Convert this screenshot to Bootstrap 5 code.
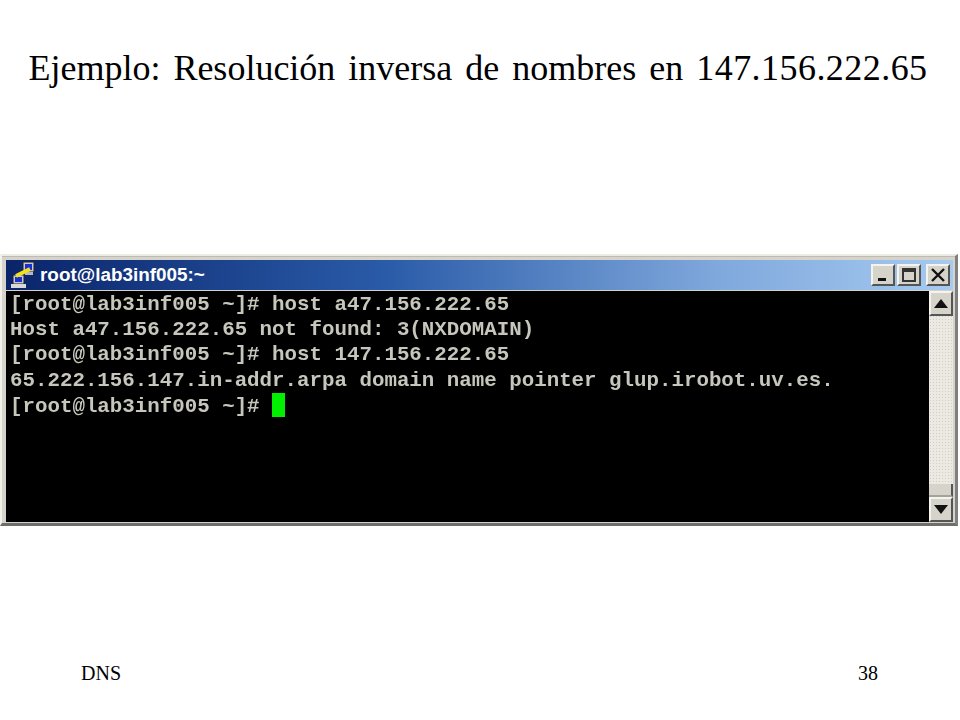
<!doctype html>
<html lang="es"><head><meta charset="utf-8"><title>DNS 38</title>
<link rel="stylesheet" href="https://cdn.jsdelivr.net/npm/bootstrap@5.3.0/dist/css/bootstrap.min.css">
<style>
html,body{margin:0;height:720px;overflow:hidden;background:#fff}
.slide{width:960px;height:720px;font-family:"Liberation Serif",serif;color:#000}
.slide-title{font-size:36px;line-height:42px;margin:0;padding:47px 4px 0 0;height:254px;font-weight:400;text-align:center;word-spacing:4px;font-family:"Liberation Serif",serif}
.title-num{letter-spacing:.45px}
.win{width:958px;height:272px;background:#d6d3ca;border-top:2px solid #ecebe6;border-bottom:3px solid #6e6e6a;padding:4px 2px 2px 4px;border-left:2px solid #f2f1ec;border-right:3px solid #808080;box-shadow:inset 0 1px 0 #bdbbb3}
.win-bar{height:30px;background:linear-gradient(90deg,#0a246a 0%,#2a5ba8 40%,#7fa8dc 75%,#a6caf0 100%);padding:0 3px 0 4px;color:#fff;font:700 18.9px/28px "Liberation Sans",sans-serif;margin-bottom:1px}
.win-btn{width:24px;height:22px;background:#d6d3ca;border:2px solid;border-color:#f4f3ee #555 #555 #f4f3ee;color:#000}
.win-btns{gap:2px}
.win-btns .win-btn:last-child{margin-left:3px}
.win-body{height:231px}
.term{background:#000;color:#c6c6bc;font:700 20.8px/25.2px "Liberation Mono",monospace;padding:1px 0 0 4px;white-space:pre;width:923px;overflow:hidden;flex:none}
.term-text{display:block;filter:blur(.5px)}
.term-cursor{display:inline-block;width:13px;height:24px;background:#00f000;vertical-align:-5px}
.scroll-track{width:24px;background:#ebe9e2;background-image:radial-gradient(#cfcdc5 1px,transparent 1px);background-size:3px 3px}
.scroll-btn{height:25px;background:#d6d3ca;border:2px solid;border-color:#f4f3ee #555 #555 #f4f3ee}
.scroll-thumb{height:13px;background:#d6d3ca;border-right:2px solid #555;border-bottom:2px solid #a5a39c}
.foot{font-size:20px;line-height:24px;padding:135px 82px 0 81px}
</style></head><body>
<main class="slide">
<h1 class="slide-title">Ejemplo: Resolución inversa de nombres en <span class="title-num">147.156.222.65</span></h1>
<section class="win">
 <div class="win-bar d-flex align-items-center justify-content-between">
  <div class="d-flex align-items-center gap-1">
   <svg width="26" height="28" viewBox="0 0 26 28" aria-hidden="true"><rect x="13" y="1" width="11" height="10" fill="#c8c8d0" stroke="#222"/><rect x="15" y="3" width="7" height="6" fill="#1a2fd0"/><rect x="15" y="11" width="8" height="3" fill="#b8b8c0"/><rect x="3" y="14" width="11" height="9" fill="#c8c8d0" stroke="#222"/><rect x="5" y="16" width="7" height="5" fill="#1a2fd0"/><rect x="1" y="23" width="15" height="4" fill="#d8d8d8"/><path d="M6 15 L20 8" stroke="#f0e020" stroke-width="4"/></svg>
   <span>root@lab3inf005:~</span>
  </div>
  <div class="win-btns d-flex">
   <span class="win-btn d-flex align-items-center justify-content-center"><svg width="14" height="14" viewBox="0 0 14 14" aria-hidden="true"><rect x="2" y="10" width="8" height="3" fill="#111"/></svg></span>
   <span class="win-btn d-flex align-items-center justify-content-center"><svg width="16" height="16" viewBox="0 0 16 16" aria-hidden="true"><rect x="2" y="2" width="12" height="12" fill="none" stroke="#333" stroke-width="2"/><rect x="2" y="2" width="12" height="3" fill="#333"/></svg></span>
   <span class="win-btn d-flex align-items-center justify-content-center"><svg width="16" height="14" viewBox="0 0 16 14" aria-hidden="true"><path d="M2 1 L14 13 M14 1 L2 13" stroke="#111" stroke-width="2.4"/></svg></span>
  </div>
 </div>
 <div class="win-body d-flex">
  <div class="term"><div class="term-text">[root@lab3inf005 ~]# host a47.156.222.65
Host a47.156.222.65 not found: 3(NXDOMAIN)
[root@lab3inf005 ~]# host 147.156.222.65
65.222.156.147.in-addr.arpa domain name pointer glup.irobot.uv.es.
[root@lab3inf005 ~]# <span class="term-cursor"></span></div></div>
  <div class="scroll-track d-flex flex-column flex-grow-1">
   <div class="scroll-btn d-flex align-items-center justify-content-center"><svg width="14" height="9" viewBox="0 0 14 9" aria-hidden="true"><path d="M7 0 L14 9 H0Z" fill="#111"/></svg></div>
   <div class="flex-grow-1"></div>
   <div class="scroll-thumb"></div>
   <div class="scroll-btn d-flex align-items-center justify-content-center"><svg width="14" height="9" viewBox="0 0 14 9" aria-hidden="true"><path d="M0 0 H14 L7 9Z" fill="#111"/></svg></div>
  </div>
 </div>
</section>
<footer class="foot d-flex justify-content-between"><span>DNS</span><span>38</span></footer>
</main>
</body></html>
